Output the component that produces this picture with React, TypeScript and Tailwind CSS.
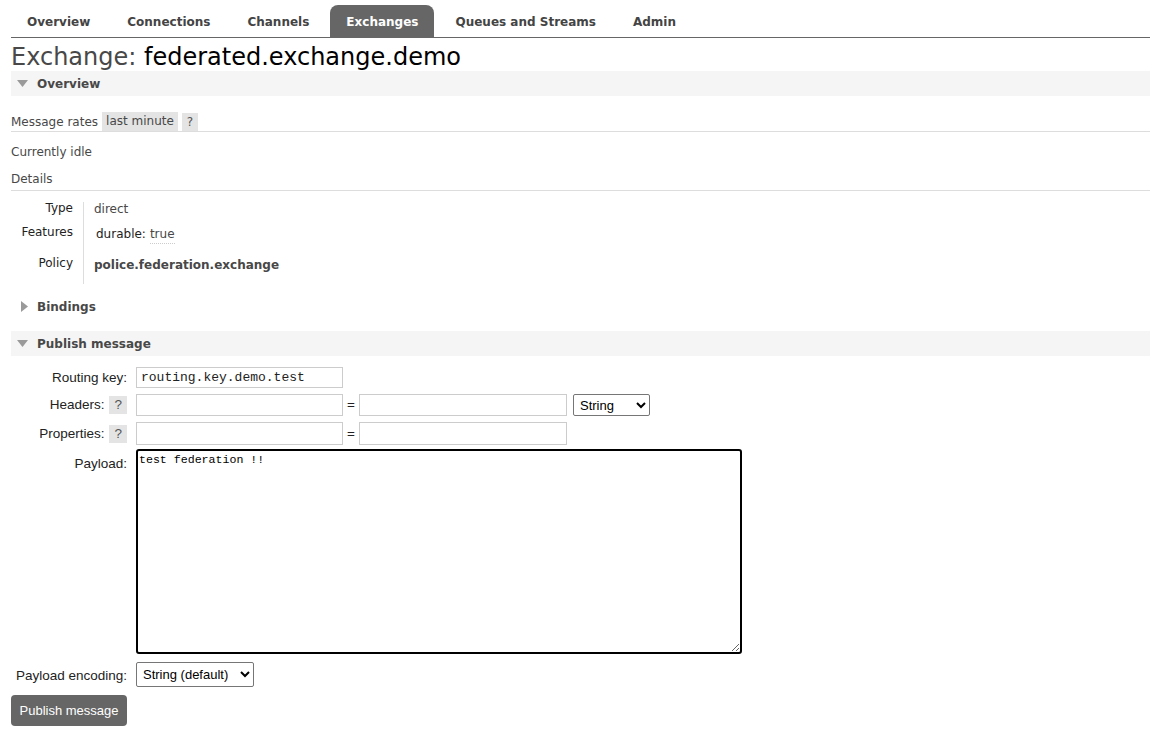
import { useState } from "react";

const tabs = ["Overview", "Connections", "Channels", "Exchanges", "Queues and Streams", "Admin"];

function Caret({ open }: { open: boolean }) {
  return open ? (
    <svg width="11" height="7" viewBox="0 0 11 7" className="mr-[9px] ml-[6px]">
      <path d="M0 0 L11 0 L5.5 7 Z" fill="#9a9a9a" />
    </svg>
  ) : (
    <svg width="7" height="11" viewBox="0 0 7 11" className="mr-[9px] ml-[10px]">
      <path d="M0 0 L7 5.5 L0 11 Z" fill="#9a9a9a" />
    </svg>
  );
}

function SectionHeader({ title, open, shaded }: { title: string; open: boolean; shaded?: boolean }) {
  return (
    <div className={`flex h-[25px] items-center ${shaded ? "bg-[#f5f5f5]" : ""}`}>
      <Caret open={open} />
      <span className="text-[12px] font-bold text-[#484848]">{title}</span>
    </div>
  );
}

function Help() {
  return <span className="inline-block bg-[#e4e4e4] px-[5px] leading-[18px] text-[#555]">?</span>;
}

export default function App() {
  const [routingKey, setRoutingKey] = useState("routing.key.demo.test");
  const [payload, setPayload] = useState("test federation !!");

  return (
    <div className="min-h-[732px] bg-white pl-[11px] font-['DejaVu_Sans',Verdana,sans-serif] text-[12px] text-[#484848]">
      <ul className="flex gap-[5px] border-b border-[#666] pt-[5px]">
        {tabs.map((t) => (
          <li
            key={t}
            className={`h-[32px] rounded-t-[8px] px-4 text-[12px] leading-[34px] font-bold ${
              t === "Exchanges" ? "bg-[#666] text-white" : "text-[#444]"
            }`}
          >
            {t}
          </li>
        ))}
      </ul>

      <h1 className="h-[33px] pt-[5px] text-[24px] leading-[28px] text-[#484848]">
        Exchange: <span className="text-black">federated.exchange.demo</span>
      </h1>

      <SectionHeader title="Overview" open shaded />

      <div className="mt-[16px] flex h-[20px] items-center border-b border-[#ddd]">
        <span className="mr-[4px]">Message rates</span>
        <span className="mr-[4px] bg-[#e4e4e4] px-[4px] leading-[19px]">last minute</span>
        <Help />
      </div>

      <p className="mt-[11px] leading-[18px]">Currently idle</p>
      <p className="mt-[9px] border-b border-[#ddd] pb-[2px] leading-[18px]">Details</p>

      <div className="mt-[11px] flex">
        <div className="flex w-[62px] flex-col items-end gap-[7px] text-[#222]">
          <span className="-mt-[2px] leading-[16px]">Type</span>
          <span className="leading-[18px]">Features</span>
          <span className="mt-[6px] leading-[18px]">Policy</span>
        </div>
        <div className="ml-[10px] flex h-[82px] flex-col border-l border-[#ddd] pl-[10px]">
          <span className="-mt-[1px] leading-[16px]">direct</span>
          <span className="mt-[8px] flex items-baseline leading-[18px] text-[#222]">
            <span className="ml-[2px]">durable:</span>
            <span className="ml-[4px] border-b border-dotted border-[#ccc] text-[#484848]">true</span>
          </span>
          <span className="mt-[12px] text-[12px] font-bold leading-[18px]">police.federation.exchange</span>
        </div>
      </div>

      <div className="mt-[10px]">
        <SectionHeader title="Bindings" open={false} />
      </div>

      <div className="mt-[12px]">
        <SectionHeader title="Publish message" open shaded />
      </div>

      <div className="mt-[10px] font-['Liberation_Sans',Arial,sans-serif] text-[13.5px] text-[#222]">
        <div className="flex items-center">
          <label className="mt-[2px] w-[116px] text-right">Routing key:</label>
          <input
            className="ml-[9px] h-[21px] w-[207px] border border-[#ccc] px-[4px] font-['Liberation_Mono',monospace] text-[13px] text-[#222] outline-none"
            value={routingKey}
            onChange={(e) => setRoutingKey(e.target.value)}
          />
        </div>

        <div className="mt-[6px] flex items-center">
          <div className="flex w-[116px] items-center justify-end gap-[5px]">
            <label>Headers:</label>
            <Help />
          </div>
          <input className="ml-[9px] h-[22px] w-[207px] border border-[#ccc] outline-none" />
          <span className="w-[16px] text-center">=</span>
          <input className="h-[22px] w-[208px] border border-[#ccc] outline-none" />
          <select className="ml-[6px] h-[22px] w-[77px] rounded-[2px] border border-[#767676] px-[2px] text-[13px] text-black">
            <option>String</option>
          </select>
        </div>

        <div className="mt-[6px] flex items-center">
          <div className="flex w-[116px] items-center justify-end gap-[5px]">
            <label>Properties:</label>
            <Help />
          </div>
          <input className="ml-[9px] h-[23px] w-[207px] border border-[#ccc] outline-none" />
          <span className="w-[16px] text-center">=</span>
          <input className="h-[23px] w-[208px] border border-[#ccc] outline-none" />
        </div>

        <div className="mt-[4px] flex items-start">
          <label className="mt-[5px] w-[116px] text-right">Payload:</label>
          <textarea
            className="ml-[9px] h-[205px] w-[606px] resize rounded-[3px] border-2 border-black px-[1px] py-[1px] font-['Liberation_Mono',monospace] text-[11.6px] leading-[15px] text-black outline-none"
            value={payload}
            onChange={(e) => setPayload(e.target.value)}
          />
        </div>

        <div className="mt-[8px] flex items-center">
          <label className="mt-[2px] w-[116px] text-right">Payload encoding:</label>
          <select className="ml-[9px] h-[25px] w-[118px] rounded-[2px] border border-[#767676] px-[2px] text-[13px] text-black">
            <option>String (default)</option>
          </select>
        </div>

        <button
          type="button"
          className="mt-[8px] h-[31px] w-[116px] rounded-[4px] bg-[#666] text-[13px] text-white"
        >
          Publish message
        </button>
      </div>
    </div>
  );
}
